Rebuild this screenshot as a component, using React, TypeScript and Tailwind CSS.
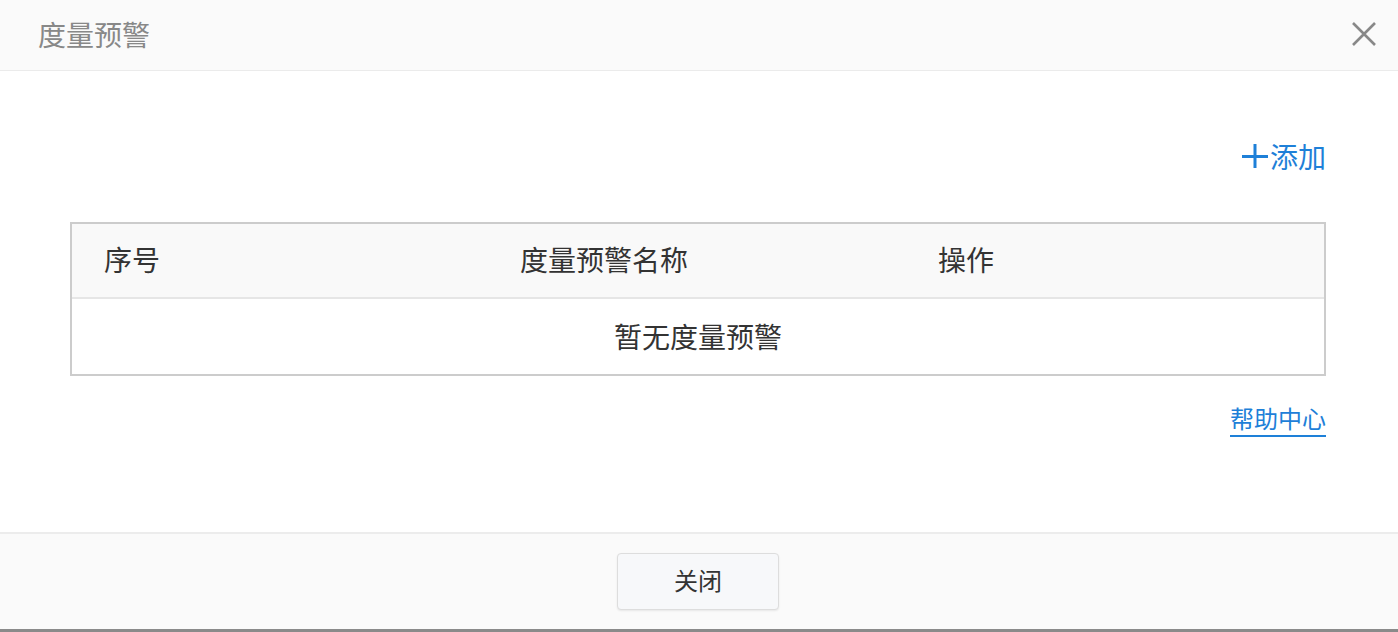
import React from "react";

const font = { fontFamily: '"Noto Sans CJK SC", "Noto Sans", sans-serif' };

export default function App() {
  return (
    <div className="w-[1398px] h-[632px] bg-white flex flex-col overflow-hidden" style={font}>
      <div className="h-[71px] shrink-0 bg-[#fafafa] border-b border-[#ebebeb] flex items-center justify-between pl-[38px] pr-[20px]">
        <span className="text-[28px] leading-none text-[#888888] -mt-[2px]">度量预警</span>
        <svg width="26" height="26" viewBox="0 0 26 26" className="mr-[1px] -mt-[2px]">
          <path d="M2 2 L24 24 M24 2 L2 24" stroke="#888888" strokeWidth="2.6" strokeLinecap="butt" />
        </svg>
      </div>
      <div className="flex-1 flex flex-col px-[70px] pr-[72px]">
        <div className="flex justify-end mt-[73px] h-[24px] items-center">
          <div className="flex items-center text-[#1e80d8] text-[28px] leading-none">
            <svg width="28" height="26" viewBox="0 0 28 26" className="mr-[1px]">
              <path d="M1 13.5 H27 M14 1 V25" stroke="#1e80d8" strokeWidth="3" />
            </svg>
            <span className="-mt-[1px]">添加</span>
          </div>
        </div>
        <div className="mt-[54px] border-2 border-[#cccccc] text-[#333333] text-[28px] leading-none">
          <div className="h-[75px] bg-[#f9f9f9] border-b-2 border-[#e6e6e6] flex items-center pb-[3px]">
            <div className="w-[448px] pl-[32px]">序号</div>
            <div className="w-[418px]">度量预警名称</div>
            <div className="flex-1">操作</div>
          </div>
          <div className="h-[75px] flex items-center justify-center pb-[2px]">暂无度量预警</div>
        </div>
        <div className="flex justify-end mt-[30px]">
          <span className="text-[24px] leading-none text-[#1e80d8] border-b-2 border-[#1e80d8] pb-[5px]">帮助中心</span>
        </div>
      </div>
      <div className="h-[97px] shrink-0 bg-[#fafafa] border-t-2 border-[#ececec] flex justify-center pt-[19px] pr-[2px]">
        <button className="w-[162px] h-[57px] pb-[3px] rounded-[4px] border border-[#dddddd] bg-[#f7f8fa] text-[24px] text-[#333333] shadow-[0_1px_2px_rgba(0,0,0,0.08)]">关闭</button>
      </div>
      <div className="h-[3px] shrink-0 bg-[#8a8a8a]" />
    </div>
  );
}
